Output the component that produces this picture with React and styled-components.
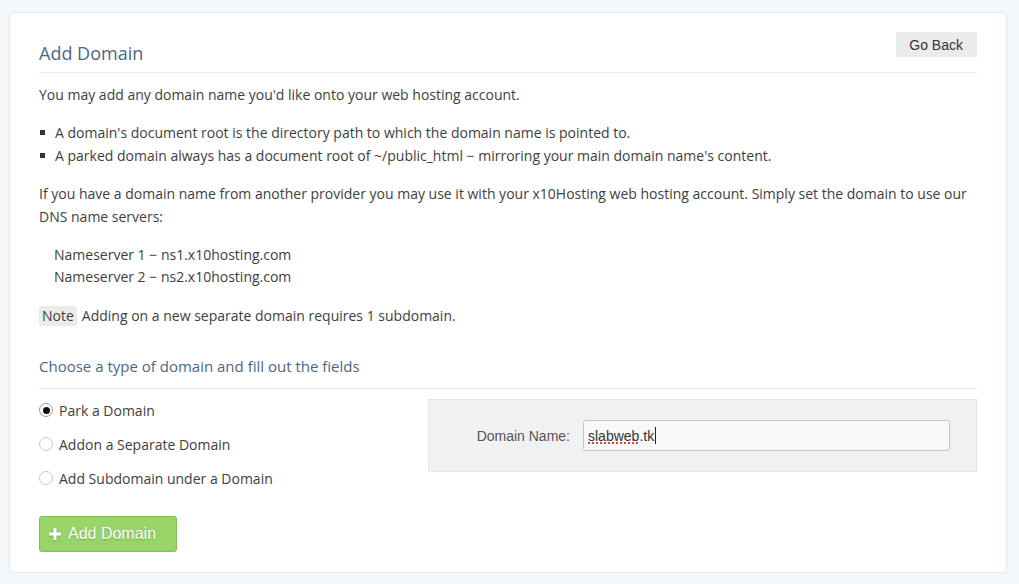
import React from "react";
import styled, { createGlobalStyle } from "styled-components";

const Global = createGlobalStyle`
  html, body { margin: 0; padding: 0; }
  body {
    background: #f4f8fb;
    font-family: "Open Sans", "Noto Sans", sans-serif;
    font-size: 14px;
    color: #3e3e3e;
  }
`;

const Page = styled.div`
  padding: 12px 12px 12px 9px;
`;

const Card = styled.div`
  background: #fff;
  border: 1px solid #e2eaf0;
  border-radius: 4px;
  padding: 19px 29px 20px 29px;
`;

const Header = styled.div`
  display: flex;
  justify-content: space-between;
  align-items: flex-start;
  padding-bottom: 7px;
  border-bottom: 1px solid #e9eff4;
`;

const Title = styled.h1`
  margin: 9px 0 0;
  font-size: 18px;
  font-weight: 400;
  line-height: 24px;
  color: #4b6785;
`;

const GreyButton = styled.button`
  height: 25px;
  padding: 0 14px 0 13px;
  border: none;
  background: #ebebeb;
  color: #333;
  font-family: "Liberation Sans", Arial, sans-serif;
  font-size: 14px;
  cursor: pointer;
`;

const Para = styled.p`
  margin: ${(p) => p.$mt || 0}px 0 0;
  line-height: 23px;
`;

const List = styled.ul`
  list-style: none;
  margin: 15px 0 0;
  padding: 0;
`;

const Item = styled.li`
  position: relative;
  padding-left: 16px;
  line-height: 23px;
  &::before {
    content: "";
    position: absolute;
    left: 1px;
    top: 9px;
    width: 5px;
    height: 5px;
    background: #333;
  }
`;

const Servers = styled.div`
  margin: 16px 0 0;
  padding-left: 15px;
  line-height: 22px;
`;

const NoteLine = styled.div`
  margin-top: 16px;
  display: flex;
  align-items: center;
  gap: 5px;
  line-height: 23px;
`;

const Badge = styled.span`
  display: inline-block;
  background: #ebebeb;
  border-radius: 2px;
  padding: 0 3px;
  line-height: 20px;
`;

const SubTitle = styled.h2`
  margin: 28px 0 0;
  padding-bottom: 11px;
  border-bottom: 1px solid #e9eff4;
  font-size: 15px;
  font-weight: 400;
  line-height: 22px;
  color: #4b6785;
`;

const FormGrid = styled.div`
  display: grid;
  grid-template-columns: 1fr 549px;
  align-items: start;
`;

const Radios = styled.div`
  margin-top: 4px;
  display: flex;
  flex-direction: column;
`;

const RadioRow = styled.label`
  display: flex;
  align-items: center;
  gap: 6px;
  height: 34px;
  cursor: pointer;
`;

const RadioDot = styled.span`
  box-sizing: border-box;
  width: 14px;
  height: 14px;
  border-radius: 50%;
  border: 1px solid ${(p) => (p.$on ? "#9a9a9a" : "#c9c9c9")};
  background: #fff;
  display: flex;
  align-items: center;
  justify-content: center;
  &::after {
    content: "";
    width: 7px;
    height: 7px;
    border-radius: 50%;
    background: ${(p) => (p.$on ? "#111" : "transparent")};
  }
`;

const Panel = styled.div`
  margin-top: 10px;
  height: 73px;
  box-sizing: border-box;
  background: #f1f1f1;
  border: 1px solid #e4e4e4;
  display: grid;
  grid-template-columns: 141px 1fr;
  column-gap: 13px;
  align-items: center;
  padding-right: 26px;
`;

const FieldLabel = styled.span`
  text-align: right;
  font-family: "Liberation Sans", Arial, sans-serif;
  font-size: 14px;
  color: #555;
`;

const FakeInput = styled.div`
  box-sizing: border-box;
  height: 31px;
  border: 1px solid #c6c6c6;
  border-radius: 3px;
  background: #f9f9f9;
  display: flex;
  align-items: center;
  padding-left: 4px;
  font-family: "Liberation Sans", Arial, sans-serif;
  font-size: 14px;
  color: #333;
`;

const Misspelt = styled.span`
  text-decoration: underline dotted #e0413a;
  text-decoration-thickness: 2px;
  text-underline-offset: 2px;
`;

const Caret = styled.span`
  display: inline-block;
  width: 1px;
  height: 17px;
  background: #222;
  margin-left: 1px;
`;

const GreenButton = styled.button`
  margin-top: 21px;
  width: 138px;
  height: 36px;
  display: flex;
  align-items: center;
  gap: 7px;
  padding: 0 0 0 9px;
  background: #99d469;
  border: 1px solid #7cc152;
  border-radius: 3px;
  color: #fff;
  font-family: "Liberation Sans", Arial, sans-serif;
  font-size: 16px;
  text-shadow: 0 1px 1px rgba(0, 0, 0, 0.25);
  cursor: pointer;
`;

const Plus = () => (
  <svg width="12" height="12" viewBox="0 0 12 12" style={{ filter: "drop-shadow(0 1px 1px rgba(0,0,0,0.2))" }}>
    <path d="M4.5 0h3v4.5H12v3H7.5V12h-3V7.5H0v-3h4.5z" fill="#fff" />
  </svg>
);

const options = ["Park a Domain", "Addon a Separate Domain", "Add Subdomain under a Domain"];

export default function App() {
  return (
    <>
      <Global />
      <Page>
        <Card>
          <Header>
            <Title>Add Domain</Title>
            <GreyButton>Go Back</GreyButton>
          </Header>
          <Para $mt={10}>You may add any domain name you'd like onto your web hosting account.</Para>
          <List>
            <Item>A domain's document root is the directory path to which the domain name is pointed to.</Item>
            <Item>A parked domain always has a document root of ~/public_html − mirroring your main domain name's content.</Item>
          </List>
          <Para $mt={15}>
            If you have a domain name from another provider you may use it with your x10Hosting web hosting account. Simply set the domain to use our DNS name servers:
          </Para>
          <Servers>
            <div>Nameserver 1 − ns1.x10hosting.com</div>
            <div>Nameserver 2 − ns2.x10hosting.com</div>
          </Servers>
          <NoteLine>
            <Badge>Note</Badge>
            <span>Adding on a new separate domain requires 1 subdomain.</span>
          </NoteLine>
          <SubTitle>Choose a type of domain and fill out the fields</SubTitle>
          <FormGrid>
            <Radios>
              {options.map((o, i) => (
                <RadioRow key={o}>
                  <RadioDot $on={i === 0} />
                  <span>{o}</span>
                </RadioRow>
              ))}
            </Radios>
            <Panel>
              <FieldLabel>Domain Name:</FieldLabel>
              <FakeInput>
                <Misspelt>slabweb</Misspelt>.tk<Caret />
              </FakeInput>
            </Panel>
          </FormGrid>
          <GreenButton>
            <Plus />
            Add Domain
          </GreenButton>
        </Card>
      </Page>
    </>
  );
}
